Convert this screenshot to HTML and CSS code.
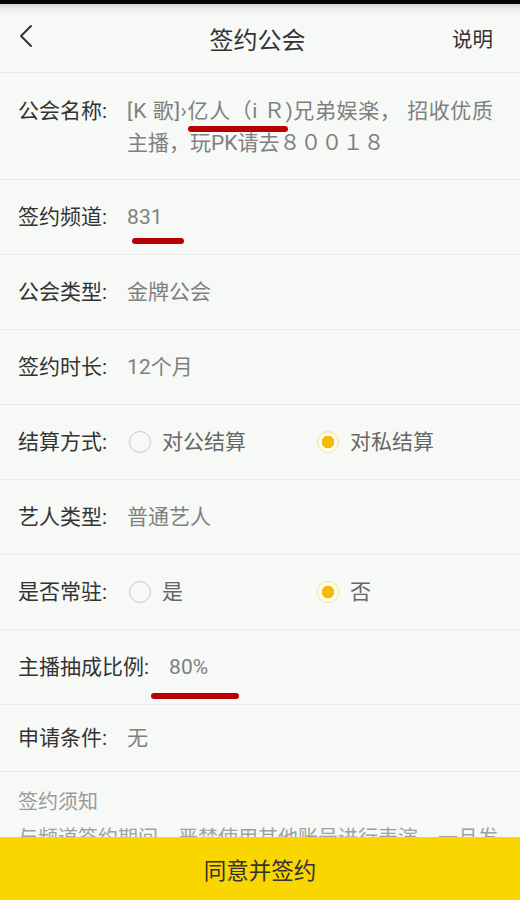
FILE: index.html
```html
<!DOCTYPE html>
<html lang="zh-CN">
<head>
<meta charset="utf-8">
<title>签约公会</title>
<link rel="stylesheet" href="styles.css">
</head>
<body>
<div class="status"></div>
<header class="topbar">
  <span class="back">
    <svg width="16" height="24" viewBox="0 0 16 24"><polyline points="13,2 3,12 13,22" fill="none" stroke="#333" stroke-width="2" stroke-linecap="round" stroke-linejoin="round"/></svg>
  </span>
  <h1 class="title">签约公会</h1>
  <span class="help">说明</span>
</header>
<main class="list">
  <div class="row row-tall">
    <span class="label">公会名称:</span>
    <span class="value value-multi"><span class="line-wide">[K 歌]›<span class="marked">亿人（i Ｒ<i class="mark mark-1"></i></span>)兄弟娱楽， 招收优质</span><br>主播，玩PK请去８００１８</span>
  </div>
  <div class="row">
    <span class="label">签约频道:</span>
    <span class="value marked">831<i class="mark mark-2"></i></span>
  </div>
  <div class="row">
    <span class="label">公会类型:</span>
    <span class="value">金牌公会</span>
  </div>
  <div class="row">
    <span class="label">签约时长:</span>
    <span class="value">12个月</span>
  </div>
  <div class="row">
    <span class="label">结算方式:</span>
    <div class="options">
      <span class="opt"><span class="radio"></span>对公结算</span>
      <span class="opt"><span class="radio on"></span>对私结算</span>
    </div>
  </div>
  <div class="row">
    <span class="label">艺人类型:</span>
    <span class="value">普通艺人</span>
  </div>
  <div class="row">
    <span class="label">是否常驻:</span>
    <div class="options">
      <span class="opt"><span class="radio"></span>是</span>
      <span class="opt"><span class="radio on"></span>否</span>
    </div>
  </div>
  <div class="row">
    <span class="label">主播抽成比例:</span>
    <span class="value marked">80%<i class="mark mark-3"></i></span>
  </div>
  <div class="row row-short">
    <span class="label">申请条件:</span>
    <span class="value">无</span>
  </div>
  <section class="notice">
    <h2 class="notice-title">签约须知</h2>
    <p class="notice-text">与频道签约期间，严禁使用其他账号进行表演，一旦发现将解除签约关系并追究责任。</p>
  </section>
</main>
<button class="agree">同意并签约</button>
</body>
</html>
```
FILE: styles.css
```css
html, body {
  margin: 0;
  padding: 0;
}
body {
  background: #f6f9f6;
  font-family: Roboto, "Noto Sans CJK SC", sans-serif;
  color: #333;
  width: 520px;
  height: 900px;
  overflow: hidden;
}
.status {
  height: 4px;
  background: #050505;
}
.topbar {
  height: 68px;
  display: flex;
  align-items: center;
  justify-content: space-between;
  padding: 0 27px 0 18px;
  background: linear-gradient(#d6d8d6 0px, #eef1ef 6px, #f6f9f6 12px);
  border-bottom: 1px solid #e6e9e6;
}
.back {
  width: 60px;
  display: flex;
  align-items: center;
  height: 24px;
  margin-top: -4px;
}
.title {
  margin: 0;
  font-size: 24px;
  font-weight: 400;
  color: #333;
  margin-left: 4px;
}
.help {
  width: 60px;
  text-align: right;
  font-size: 20.5px;
  color: #333;
}
.list {
  display: flex;
  flex-direction: column;
}
.row {
  height: 74px;
  display: flex;
  align-items: center;
  padding: 0 18px;
  border-bottom: 1px solid #e8ebe8;
  font-size: 21px;
  line-height: 32px;
}
.row-tall {
  height: auto;
  align-items: flex-start;
  padding-top: 22px;
  padding-bottom: 20px;
}
.row-short {
  height: 66px;
}
.label {
  color: #333;
  flex: none;
  margin-right: 20px;
  white-space: nowrap;
}
.value {
  color: #808080;
}
.value-multi {
  flex: 1;
}
.line-wide {
  letter-spacing: 0.6px;
  white-space: nowrap;
}
.marked {
  position: relative;
  display: inline-block;
}
.mark {
  position: absolute;
  height: 6px;
  border-radius: 3px;
  background: #b80005;
}
.mark-1 {
  left: 0;
  right: -3px;
  bottom: -5px;
}
.mark-2 {
  left: 5px;
  width: 52px;
  bottom: -11px;
}
.mark-3 {
  left: -18px;
  width: 88px;
  bottom: -16px;
}
.options {
  display: flex;
}
.opt {
  width: 188px;
  display: flex;
  align-items: center;
  color: #666;
}
.radio {
  width: 20px;
  height: 20px;
  border-radius: 50%;
  border: 1.5px solid #c8c8c8;
  margin: 0 11px 0 2px;
  box-sizing: content-box;
  position: relative;
}
.radio.on {
  border-color: #f3e39a;
  background: radial-gradient(circle, #f2b90a 0 6px, #fffbe6 6.5px);
}
.notice {
  padding: 14px 18px 0;
}
.notice-title {
  margin: 0;
  font-size: 20px;
  font-weight: 400;
  color: #9a9a9a;
  line-height: 32px;
}
.notice-text {
  margin: 4px 0 0;
  font-size: 20px;
  line-height: 32px;
  color: #a0a0a0;
}
.agree {
  position: fixed;
  left: 0;
  bottom: 0;
  width: 520px;
  height: 63px;
  border: 0;
  margin: 0;
  background: #f9d600;
  font-family: "Noto Sans CJK SC", sans-serif;
  font-size: 22.5px;
  color: #333;
}
```
